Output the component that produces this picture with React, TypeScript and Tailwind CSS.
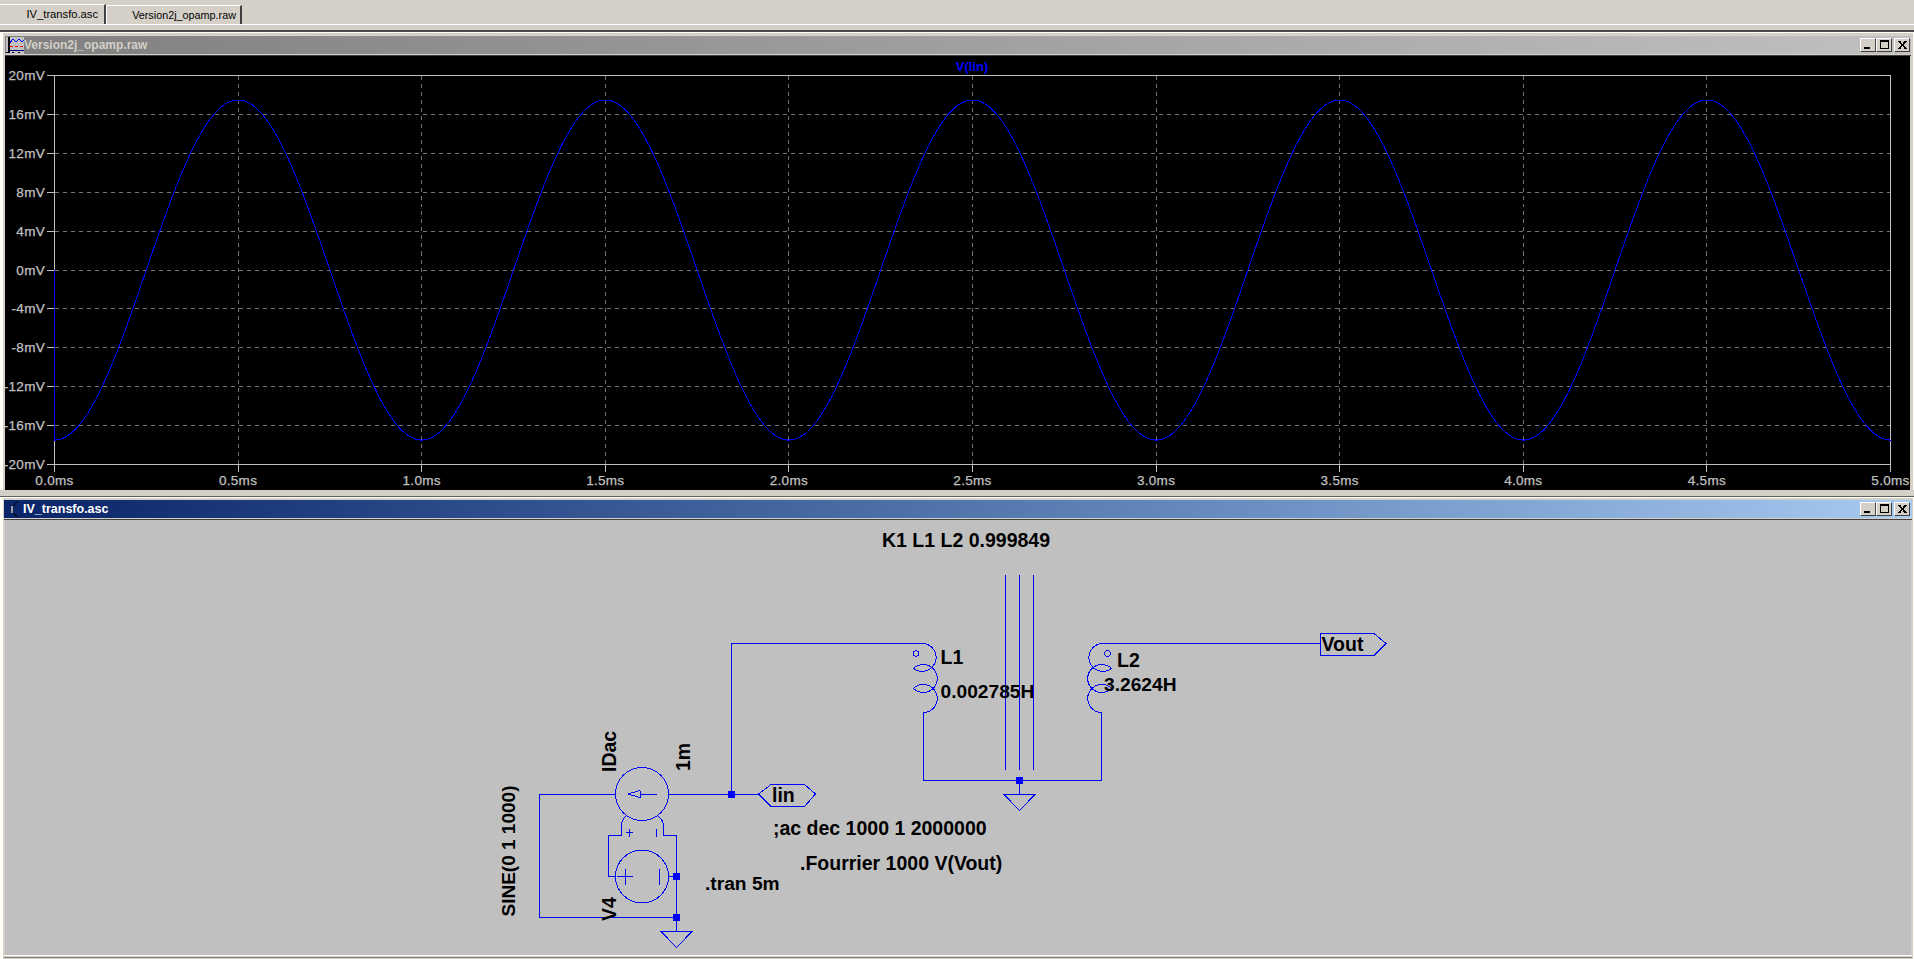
import React from "react";

const X0 = 54.5, X1 = 1890.5, Y0 = 75.5, Y1 = 464.5;
const yLabels = ["20mV","16mV","12mV","8mV","4mV","0mV","-4mV","-8mV","-12mV","-16mV","-20mV"];
const xLabels = ["0.0ms","0.5ms","1.0ms","1.5ms","2.0ms","2.5ms","3.0ms","3.5ms","4.0ms","4.5ms","5.0ms"];

function wave() {
  const pts: string[] = ["M54.5 270", "L54.5 440"];
  for (let x = X0; x <= X1; x += 1) {
    const t = (x - X0) / (X1 - X0) * 5;
    pts.push(`L${x.toFixed(1)} ${(270 + 170 * Math.cos(2 * Math.PI * t)).toFixed(1)}`);
  }
  return pts.join(" ");
}

function WinBtn({ kind }: { kind: "min" | "max" | "close" }) {
  return (
    <div className="w-4 h-[14px] bg-[#d4d0c8] border-t border-l border-white border-r border-b border-r-[#404040] border-b-[#404040] flex items-center justify-center">
      <svg width="12" height="10" viewBox="0 0 12 10" shapeRendering="crispEdges">
        {kind === "min" && <rect x="2" y="7" width="6" height="2" fill="#000" />}
        {kind === "max" && <path d="M2.5 0.5h8v8h-8zM2.5 1.5h8" fill="none" stroke="#000" />}
        {kind === "close" && <path d="M2.5 1 L9.5 9 M3.5 1 L10.5 9 M9.5 1 L2.5 9 M10.5 1 L3.5 9" stroke="#000" strokeWidth="1" />}
      </svg>
    </div>
  );
}

function Controls({ className }: { className: string }) {
  return (
    <div className={`flex items-center ${className}`}>
      <WinBtn kind="min" />
      <WinBtn kind="max" />
      <div className="w-[2px]" />
      <WinBtn kind="close" />
    </div>
  );
}

function AxisText({ x, y, anchor, children }: { x: number; y: number; anchor: "end" | "middle"; children: React.ReactNode }) {
  return (
    <text x={x} y={y} textAnchor={anchor} fontSize="13.5" letterSpacing="0.3" fill="#c0c0c0" stroke="#c0c0c0" strokeWidth="0.25">
      {children}
    </text>
  );
}

function Plot() {
  return (
    <svg width="1905" height="434" viewBox="5 56 1905 434" className="block" style={{ fontFamily: '"Liberation Sans", Arial, sans-serif' }}>
      <rect x="5" y="56" width="1905" height="434" fill="#000" />
      {yLabels.map((l, i) => {
        const y = Y0 + (i * (Y1 - Y0)) / 10;
        return (
          <g key={l}>
            {i > 0 && i < 10 && <path d={`M${X0} ${Math.floor(y)}.5H${X1}`} stroke="#747474" strokeDasharray="4 4" shapeRendering="crispEdges" />}
            <path d={`M47 ${Math.floor(y)}.5H${X0}`} stroke="#c0c0c0" shapeRendering="crispEdges" />
            <AxisText x={45} y={y + 4.5} anchor="end">{l}</AxisText>
          </g>
        );
      })}
      {xLabels.map((l, i) => {
        const x = X0 + (i * (X1 - X0)) / 10;
        return (
          <g key={l}>
            {i > 0 && i < 10 && <path d={`M${Math.floor(x)}.5 ${Y0}V${Y1}`} stroke="#747474" strokeDasharray="4 4" shapeRendering="crispEdges" />}
            <path d={`M${Math.floor(x)}.5 ${Y1}V472`} stroke="#c0c0c0" shapeRendering="crispEdges" />
            <AxisText x={x} y={485} anchor="middle">{l}</AxisText>
          </g>
        );
      })}
      <rect x={X0} y={Y0} width={X1 - X0} height={Y1 - Y0} fill="none" stroke="#c0c0c0" shapeRendering="crispEdges" />
      <path d={wave()} fill="none" stroke="#0000ff" strokeWidth="1" shapeRendering="crispEdges" />
      <text x="972" y="70.5" textAnchor="middle" fontSize="13" fontWeight="700" fill="#0000ff">V(lin)</text>
    </svg>
  );
}

function T({ x, y, rot, size = 19.5, children }: { x: number; y: number; rot?: boolean; size?: number; children: React.ReactNode }) {
  return (
    <text x={x} y={y} transform={rot ? `rotate(-90 ${x} ${y})` : undefined} fontSize={size} fontWeight="700" fill="#000">
      {children}
    </text>
  );
}

function Schematic() {
  const w = "#0000ff";
  const ground = (x: number, y: number) => `M${x} ${y}H${x - 15.5}L${x} ${y + 16}L${x + 15.5} ${y}Z`;
  return (
    <svg width="1906" height="435" viewBox="5 520 1906 435" className="block" style={{ fontFamily: '"Liberation Sans", Arial, sans-serif' }}>
      <g fill="none" stroke={w} strokeWidth="1" shapeRendering="crispEdges">
        <circle cx="642" cy="794" r="26.5" />
        <circle cx="642" cy="876.5" r="26.5" />
        <path d="M615.5 794H539.5V917.5H676.5M668.5 794H758M731.5 794V643.5H923.5" />
        <path d="M656.5 794H640M640 790.5V797.5L628 794L640 790.5" />
        <path d="M626 816 Q621.5 820 621.5 826V835.5H608.5V876.5H615.5" />
        <path d="M658 816 Q663.5 820 663.5 826V835.5H676.5V931" />
        <path d="M668.5 876.5H676.5" />
        <path d="M625.5 832.5H633M629.5 829V836.5M656.5 829V836.5" />
        <path d="M617 876.5H633M625 868.5V884.5M659.5 869V884.5" />
        <path d={ground(676.5, 931.5)} />
        <path d="M758.5 794L771 784.5H804.5L815.5 794L804.5 806.5H771Z" />
        <path d="M923.5 643.5A14 14 0 1 1 913.5 668.5A14 14 0 1 1 913.5 688.5A14 14 0 1 1 923.5 712.5V780.5H1101.5V712.5A14 14 0 1 1 1111.5 688.5A14 14 0 1 1 1111.5 668.5A14 14 0 1 1 1101.5 643.5H1320" />
        <circle cx="916" cy="653.5" r="2.7" />
        <circle cx="1107.5" cy="653.5" r="2.9" />
        <path d="M1005.5 575V770M1019.5 575V770M1033.5 575V770M1019.5 780V794.5" />
        <path d={ground(1019.5, 794.5)} />
        <path d="M1320.5 633.5H1374L1386 643.5L1374 655.5H1320.5Z" />
      </g>
      <g fill={w}>
        <rect x="728" y="791" width="7" height="7" />
        <rect x="673" y="873" width="7" height="7" />
        <rect x="673" y="914" width="7" height="7" />
        <rect x="1016" y="777" width="7" height="7" />
      </g>
      <T x={882} y={547}>K1 L1 L2 0.999849</T>
      <T x={940.5} y={663.5}>L1</T>
      <T x={940.5} y={697.5} size={19.2}>0.002785H</T>
      <T x={1117} y={667}>L2</T>
      <T x={1104} y={691} size={19.2}>3.2624H</T>
      <T x={1321.5} y={650.5}>Vout</T>
      <T x={772} y={802}>lin</T>
      <T x={773} y={834.5}>;ac dec 1000 1 2000000</T>
      <T x={800} y={869.5}>.Fourrier 1000 V(Vout)</T>
      <T x={705} y={890} size={19.2}>.tran 5m</T>
      <T x={615.5} y={772} rot>IDac</T>
      <T x={689.5} y={771} rot>1m</T>
      <T x={515} y={916.5} rot size={19}>SINE(0 1 1000)</T>
      <T x={616} y={921} rot>V4</T>
    </svg>
  );
}

const tabFont = { fontFamily: '"Liberation Sans", Arial, sans-serif' };

export default function App() {
  return (
    <div className="w-[1914px] h-[959px] overflow-hidden bg-[#d4d0c8] flex flex-col">
      {/* tab strip */}
      <div className="h-[24px] flex items-end shrink-0" style={tabFont}>
        <div className="w-[106px] h-[20px] border-t border-r-2 border-t-white border-r-[#404040] flex items-center justify-end pr-[6px] text-[11.2px] text-black">IV_transfo.asc</div>
        <div className="w-[136px] h-[19px] bg-[#d4d0c8] border-t border-l border-r-2 border-white border-r-[#404040] flex items-center justify-end pr-[4px] text-[10.8px] text-black">Version2j_opamp.raw</div>
      </div>
      <div className="h-px bg-white shrink-0" />
      <div className="h-[5px] shrink-0" />
      <div className="h-[2px] bg-[#4a4a4a] shrink-0" />

      {/* waveform window */}
      <div className="h-[458px] shrink-0 border-t border-l-[3px] border-r border-[#fffff8] bg-[#d4d0c8] flex flex-col pl-[2px] pr-[2px] pt-[3px]">
        <div className="h-[18px] flex items-center justify-between bg-gradient-to-r from-[#808080] to-[#c0c0c0] shrink-0">
          <div className="flex items-center">
            <svg width="18" height="17" viewBox="0 0 18 17" shapeRendering="crispEdges" className="ml-[1px]">
              <rect width="18" height="17" fill="#c0c0c0" />
              <path d="M2.5 0V16" stroke="#000" strokeWidth="2" fill="none" />
              <path d="M4 6L7 2L10 5L13 2L16 5L18 3" fill="none" stroke="#0000ff" />
              <path d="M4 9.5H18" stroke="#ff0000" strokeDasharray="3 2" />
              <path d="M4 13.5H18" stroke="#000080" strokeWidth="1" />
              <path d="M0 15.5H18" stroke="#000" strokeDasharray="2 4" />
            </svg>
            <span className="text-[12px] font-bold text-[#d4d0c8] leading-none" style={tabFont}>Version2j_opamp.raw</span>
          </div>
          <Controls className="mr-[1px]" />
        </div>
        <div className="h-[2px] shrink-0 border-b border-[#404040]" />
        <Plot />
      </div>

      <div className="h-[6px] shrink-0" />
      <div className="h-px bg-[#606060] shrink-0" />

      {/* schematic window */}
      <div className="flex-1 border-l-[3px] border-r border-t border-[#fffff8] bg-[#d4d0c8] flex flex-col pl-[1px] pr-[1px] pt-[2px] overflow-hidden">
        <div className="h-[18px] flex items-center justify-between bg-gradient-to-r from-[#0a246a] to-[#a6caf0] shrink-0">
          <div className="flex items-center">
            <svg width="19" height="18" viewBox="0 0 19 18" shapeRendering="crispEdges" className="shrink-0">
              <path d="M8 6V13" stroke="#a0a0a0" strokeWidth="2" fill="none" />
              <path d="M9 6L14 1M9 13L14 17" stroke="#000" fill="none" />
            </svg>
            <span className="text-[12.5px] font-bold text-white leading-none" style={tabFont}>IV_transfo.asc</span>
          </div>
          <Controls className="mr-[2px]" />
        </div>
        <div className="h-[2px] shrink-0 border-b border-[#404040]" />
        <div className="h-[435px] bg-[#c0c0c0] ml-[1px] mr-[1px] shrink-0">
          <Schematic />
        </div>
        <div className="h-px bg-white shrink-0" />
        <div className="h-px shrink-0" />
        <div className="h-px bg-[#808080] shrink-0" />
      </div>
    </div>
  );
}
